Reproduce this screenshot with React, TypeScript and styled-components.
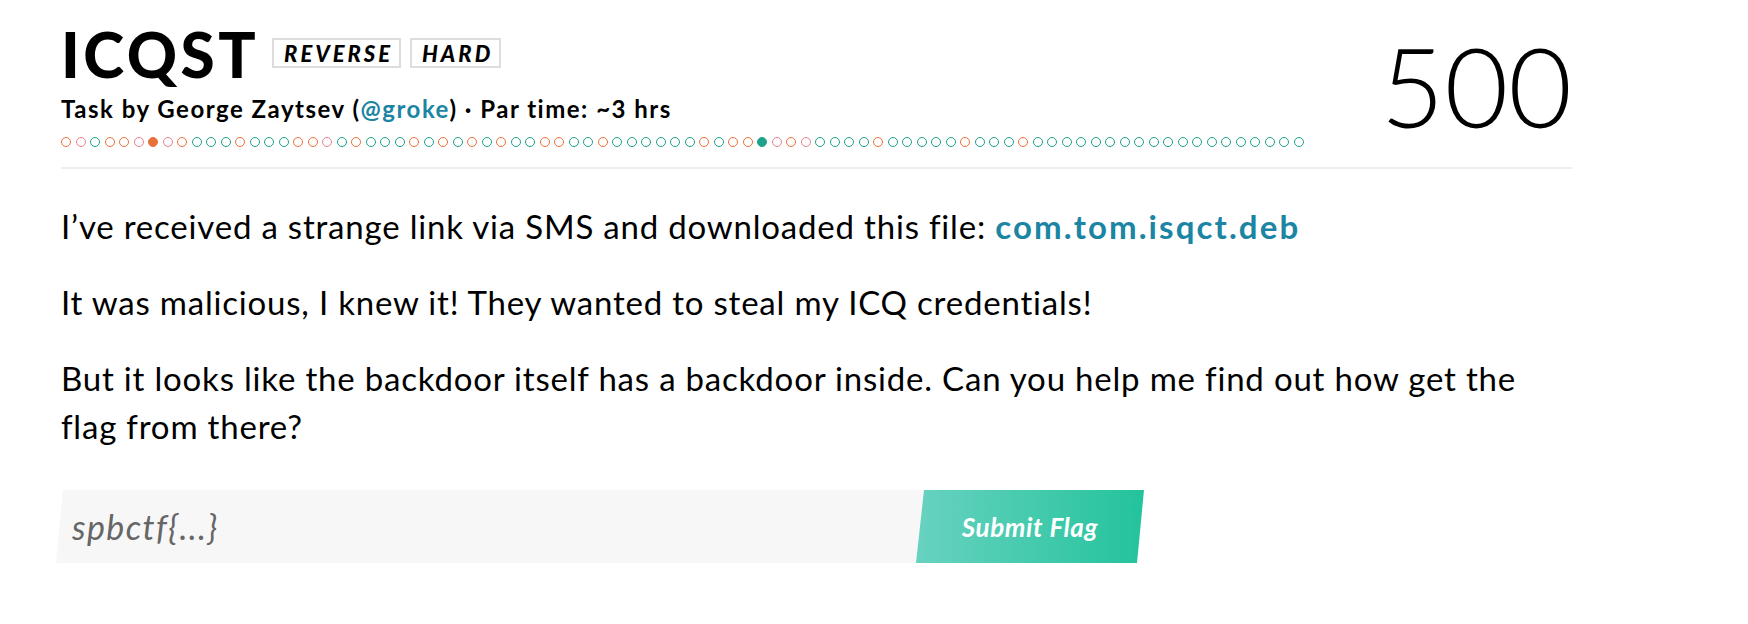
import React from 'react';
import styled, { createGlobalStyle } from 'styled-components';

const Global = createGlobalStyle`
  html, body { margin: 0; padding: 0; background: #fff; }
  body { font-family: Lato, "Noto Sans", sans-serif; color: #000; }
`;

const Page = styled.main`
  width: 1511px;
  padding: 0 0 40px 61px;
`;

const Header = styled.header`
  display: flex;
  justify-content: space-between;
  align-items: flex-start;
  border-bottom: 2px solid #eeeeee;
  padding-bottom: 20px;
`;

const HeadLeft = styled.div`
  display: flex;
  flex-direction: column;
`;

const TitleRow = styled.div`
  display: flex;
  align-items: center;
  gap: 13px;
  height: 72px;
  margin-top: 18px;
`;

const Title = styled.h1`
  margin: 0;
  font-family: Lato, sans-serif;
  font-weight: 900;
  font-size: 62px;
  line-height: 1;
  letter-spacing: 3.5px;
`;

const Tags = styled.div`
  display: flex;
  gap: 9px;
  margin-top: -2px;
`;

const Tag = styled.span`
  display: inline-block;
  border: 2px solid #dddddd;
  padding: 0 6px 0 10px;
  height: 26px;
  line-height: 27px;
  font-size: 22px;
  font-weight: 900;
  font-style: italic;
  letter-spacing: 3px;
  text-transform: uppercase;
`;

const Sub = styled.div`
  font-size: 24px;
  font-weight: 700;
  line-height: 30px;
  letter-spacing: 1.5px;
  margin-top: 4px;
`;

const Link = styled.a`
  color: #1b85a3;
  text-decoration: none;
`;

const Dots = styled.div`
  display: flex;
  gap: 4.5px;
  margin-top: 13px;
`;

const Dot = styled.span<{ $c: string; $filled: boolean }>`
  flex: none;
  width: 10px;
  height: 10px;
  box-sizing: border-box;
  border-radius: 50%;
  border: 1.6px solid ${(p) => p.$c};
  background: ${(p) => (p.$filled ? p.$c : 'transparent')};
`;

const Score = styled.div`
  font-family: Lato, sans-serif;
  font-weight: 300;
  font-size: 110px;
  line-height: 1;
  margin-top: 30px;
`;

const Body = styled.section`
  padding-top: 33px;
`;

const Para = styled.p`
  margin: 0 0 28px;
  font-size: 33px;
  line-height: 48px;
  letter-spacing: 0.8px;
  max-width: 1490px;
`;

const File = styled.a`
  color: #1b85a3;
  font-weight: 700;
  letter-spacing: 2.1px;
  text-decoration: none;
`;

const Form = styled.form`
  display: flex;
  height: 73px;
  margin: 40px 0 0 -5px;
  width: 1088px;
`;

const Field = styled.input`
  flex: 1;
  border: none;
  outline: none;
  background: #f7f7f7;
  clip-path: polygon(7px 0, 100% 0, 100% 100%, 0 100%);
  padding: 0 0 0 16px;
  font-family: Lato, sans-serif;
  font-style: italic;
  font-size: 34px;
  letter-spacing: 1.4px;
  color: #666;
  &::placeholder { color: #666666; }
`;

const Submit = styled.button`
  width: 228px;
  margin-left: -8px;
  border: none;
  cursor: pointer;
  background: linear-gradient(90deg, #68d2c0 0%, #23c39c 100%);
  clip-path: polygon(8px 0, 100% 0, calc(100% - 7px) 100%, 0 100%);
  color: #fff;
  font-family: Lato, sans-serif;
  font-weight: 700;
  font-style: italic;
  font-size: 26px;
  letter-spacing: 0.6px;
`;

const O = '#e8713a';
const P = '#e8828a';
const T = '#1ea38b';
const pattern =
  'optoopO' + 'potttot' + 'ttoopto' + 'tttotot' + 'otottoo' + 'ttotttt' + 'ttoto' +
  'oTpop' + 'tttt' + 'o' + 'ttttt' + 'o' + 'ttt' + 'o' + 'ttttttttttttttttttt';

const colorOf = (ch: string) => {
  const c = ch.toLowerCase();
  return c === 'o' ? O : c === 'p' ? P : T;
};

export default function App() {
  return (
    <>
      <Global />
      <Page>
        <Header>
          <HeadLeft>
            <TitleRow>
              <Title>ICQST</Title>
              <Tags>
                <Tag>Reverse</Tag>
                <Tag>Hard</Tag>
              </Tags>
            </TitleRow>
            <Sub>
              Task by George Zaytsev (<Link href="#">@groke</Link>) · Par time: ~3 hrs
            </Sub>
            <Dots>
              {pattern.split('').map((ch, i) => (
                <Dot key={i} $c={colorOf(ch)} $filled={ch === 'O' || ch === 'T'} />
              ))}
            </Dots>
          </HeadLeft>
          <Score>500</Score>
        </Header>
        <Body>
          <Para>
            I’ve received a strange link via SMS and downloaded this file: <File href="#">com.tom.isqct.deb</File>
          </Para>
          <Para>It was malicious, I knew it! They wanted to steal my ICQ credentials!</Para>
          <Para>
            But it looks like the backdoor itself has a backdoor inside. Can you help me find out how get the flag
            from there?
          </Para>
          <Form onSubmit={(e) => e.preventDefault()}>
            <Field placeholder="spbctf{...}" />
            <Submit type="submit">Submit Flag</Submit>
          </Form>
        </Body>
      </Page>
    </>
  );
}
